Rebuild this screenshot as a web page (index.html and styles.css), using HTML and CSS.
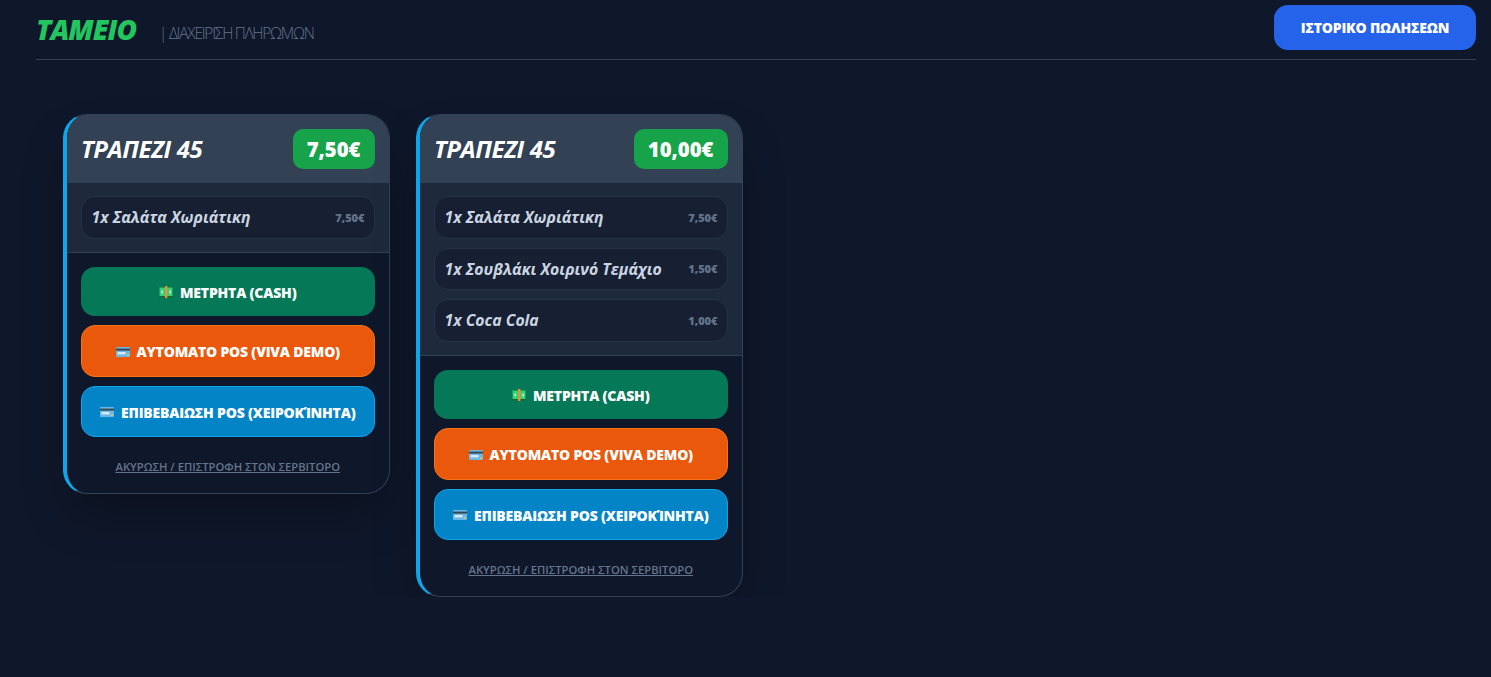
FILE: index.html
```html
<!DOCTYPE html>
<html lang="en">
<head>
    <meta charset="UTF-8">
    <title>Ταμείο</title>
    <link rel="stylesheet" href="styles.css">
</head>
<body>
    <svg class="sprites" width="0" height="0">
        <symbol id="cash" viewBox="0 0 14 12">
            <rect x="0" y="1" width="14" height="10" rx="1" fill="#1f9d55"/>
            <rect x="1" y="2" width="12" height="8" fill="#34d07b"/>
            <rect x="0" y="10" width="14" height="1.5" fill="#14693a"/>
            <rect x="6" y="0" width="2.4" height="12" fill="#e8912d"/>
            <rect x="2.4" y="4.5" width="1.6" height="3" fill="#bff3d3"/>
            <rect x="10.4" y="4.5" width="1.6" height="3" fill="#bff3d3"/>
        </symbol>
        <symbol id="card" viewBox="0 0 14 10">
            <rect x="0" y="0" width="14" height="10" rx="1" fill="#6bb8e6"/>
            <rect x="0" y="1.6" width="14" height="2" fill="#37474f"/>
            <rect x="1.5" y="5" width="8" height="2.4" fill="#d6eaf6"/>
            <rect x="11" y="7.4" width="2" height="1.6" fill="#e3c75a"/>
        </symbol>
    </svg>

    <div class="topbar">
        <div class="brand">
            <h1>ΤΑΜΕΙΟ</h1>
            <span class="subtitle">| ΔΙΑΧΕΙΡΙΣΗ ΠΛΗΡΩΜΩΝ</span>
        </div>
        <button class="history-btn">ΙΣΤΟΡΙΚΟ ΠΩΛΗΣΕΩΝ</button>
    </div>

    <div class="tables">
        <div class="card">
            <div class="card-head">
                <h2>ΤΡΑΠΕΖΙ 45</h2>
                <div class="total">7,50€</div>
            </div>
            <div class="items">
                <div class="item"><span class="item-name">1x Σαλάτα Χωριάτικη</span><span class="item-price">7,50€</span></div>
            </div>
            <div class="actions">
                <button class="pay pay-cash"><svg class="ico"><use href="#cash"/></svg>ΜΕΤΡΗΤΑ (CASH)</button>
                <button class="pay pay-viva"><svg class="ico"><use href="#card"/></svg>ΑΥΤΟΜΑΤΟ POS (VIVA DEMO)</button>
                <button class="pay pay-manual"><svg class="ico"><use href="#card"/></svg>ΕΠΙΒΕΒΑΙΩΣΗ POS (ΧΕΙΡΟΚΊΝΗΤΑ)</button>
                <a class="cancel" href="#">ΑΚΥΡΩΣΗ / ΕΠΙΣΤΡΟΦΗ ΣΤΟΝ ΣΕΡΒΙΤΟΡΟ</a>
            </div>
        </div>

        <div class="card">
            <div class="card-head">
                <h2>ΤΡΑΠΕΖΙ 45</h2>
                <div class="total">10,00€</div>
            </div>
            <div class="items">
                <div class="item"><span class="item-name">1x Σαλάτα Χωριάτικη</span><span class="item-price">7,50€</span></div>
                <div class="item"><span class="item-name">1x Σουβλάκι Χοιρινό Τεμάχιο</span><span class="item-price">1,50€</span></div>
                <div class="item"><span class="item-name">1x Coca Cola</span><span class="item-price">1,00€</span></div>
            </div>
            <div class="actions">
                <button class="pay pay-cash"><svg class="ico"><use href="#cash"/></svg>ΜΕΤΡΗΤΑ (CASH)</button>
                <button class="pay pay-viva"><svg class="ico"><use href="#card"/></svg>ΑΥΤΟΜΑΤΟ POS (VIVA DEMO)</button>
                <button class="pay pay-manual"><svg class="ico"><use href="#card"/></svg>ΕΠΙΒΕΒΑΙΩΣΗ POS (ΧΕΙΡΟΚΊΝΗΤΑ)</button>
                <a class="cancel" href="#">ΑΚΥΡΩΣΗ / ΕΠΙΣΤΡΟΦΗ ΣΤΟΝ ΣΕΡΒΙΤΟΡΟ</a>
            </div>
        </div>
    </div>
</body>
</html>
```

FILE: styles.css
```css
body {
    margin: 0;
    padding: 5px 15px 0 36px;
    background-color: #0f172a;
    font-family: "Open Sans", "Noto Sans", sans-serif;
    color: #fff;
}
.sprites {
    display: block;
    height: 0;
}
.topbar {
    display: flex;
    justify-content: space-between;
    align-items: flex-start;
    height: 54px;
    border-bottom: 1px solid #334155;
}
.brand {
    display: flex;
    align-items: flex-start;
}
.brand h1 {
    margin: 5px 0 0;
    font-size: 28px;
    line-height: 38px;
    height: 38px;
    font-weight: 800;
    font-style: italic;
    letter-spacing: -1px;
    color: #22c55e;
}
.subtitle {
    margin: 16px 0 0 23px;
    font-size: 15.5px;
    line-height: 24px;
    font-weight: 300;
    letter-spacing: -1.25px;
    color: #64748b;
}
.history-btn {
    width: 202px;
    height: 45px;
    border: 0;
    border-radius: 14px;
    background-color: #2563eb;
    color: #fff;
    font-family: inherit;
    font-size: 14px;
    font-weight: 800;
    letter-spacing: -0.2px;
}
.tables {
    display: flex;
    align-items: flex-start;
    gap: 26.5px;
    padding: 54px 0 0 27px;
}
.card {
    width: 326.5px;
    box-sizing: border-box;
    border: 1px solid #334155;
    border-left: 4px solid #0ea5e9;
    border-radius: 24px;
    overflow: hidden;
    background-color: #0f172a;
    box-shadow: 0 25px 50px -12px rgba(0, 0, 0, 0.35);
}
.card-head {
    display: flex;
    justify-content: space-between;
    align-items: center;
    height: 68px;
    box-sizing: border-box;
    padding: 0 14px;
    background-color: #334155;
}
.card-head h2 {
    margin: 0 0 2px;
    font-size: 24px;
    font-weight: 700;
    font-style: italic;
    letter-spacing: -0.4px;
}
.total {
    padding: 0 14px;
    height: 40px;
    line-height: 41px;
    border-radius: 10px;
    background-color: #16a34a;
    font-size: 20.3px;
    font-weight: 800;
}
.items {
    display: flex;
    flex-direction: column;
    gap: 8.75px;
    padding: 13px 14px;
    background-color: #1e293b;
    border-bottom: 1px solid #334155;
}
.item {
    display: flex;
    justify-content: space-between;
    align-items: center;
    height: 42.75px;
    box-sizing: border-box;
    padding: 0 9px 0 9.5px;
    border: 1px solid #263347;
    border-radius: 14px;
    background-color: #172033;
}
.item-name {
    font-size: 15.8px;
    font-weight: 700;
    font-style: italic;
    color: #cbd5e1;
}
.item-price {
    font-size: 11px;
    font-weight: 800;
    color: #64748b;
}
.actions {
    display: flex;
    flex-direction: column;
    gap: 9px;
    padding: 14px 14px 0;
    height: 240px;
    box-sizing: border-box;
}
.pay {
    display: flex;
    justify-content: center;
    align-items: center;
    gap: 7px;
    padding: 2px 0 0;
    border: 0;
    border-radius: 14px;
    color: #fff;
    font-family: inherit;
    font-size: 14px;
    font-weight: 800;
    letter-spacing: -0.2px;
}
.ico {
    width: 14px;
    height: 12px;
}
.pay-cash {
    height: 49px;
    background-color: #047857;
}
.pay-viva {
    height: 52px;
    background-color: #ea580c;
    border: 1px solid #f97316;
}
.pay-manual {
    height: 51px;
    background-color: #0284c7;
    border: 1px solid #0ea5e9;
}
.cancel {
    margin-top: 13px;
    text-align: center;
    font-size: 11.25px;
    font-weight: 600;
    color: #64748b;
}
```
